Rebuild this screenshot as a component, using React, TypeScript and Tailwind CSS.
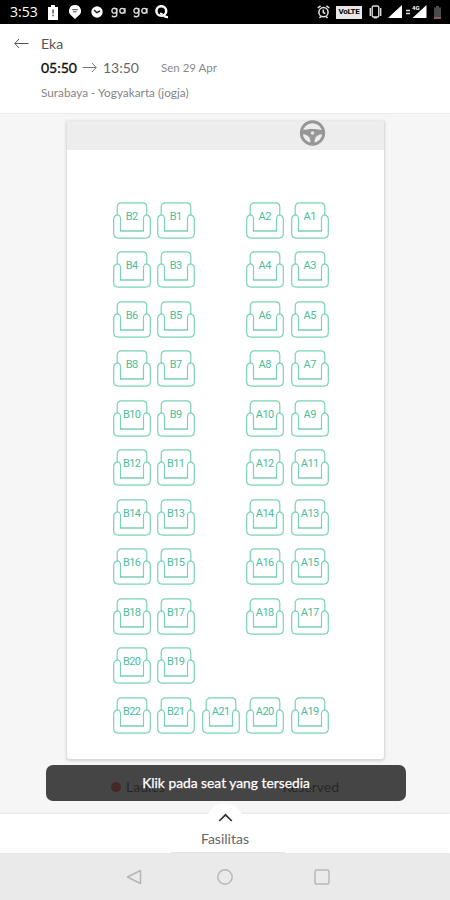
const rows: (string | null)[][] = [
  ['B2', 'B1', null, 'A2', 'A1'],
  ['B4', 'B3', null, 'A4', 'A3'],
  ['B6', 'B5', null, 'A6', 'A5'],
  ['B8', 'B7', null, 'A8', 'A7'],
  ['B10', 'B9', null, 'A10', 'A9'],
  ['B12', 'B11', null, 'A12', 'A11'],
  ['B14', 'B13', null, 'A14', 'A13'],
  ['B16', 'B15', null, 'A16', 'A15'],
  ['B18', 'B17', null, 'A18', 'A17'],
  ['B20', 'B19', null, null, null],
  ['B22', 'B21', 'A21', 'A20', 'A19'],
];

function Seat({ label }: { label: string }) {
  return (
    <svg width="38" height="38" viewBox="0 0 38 38" fill="none" stroke="#7ad2b8" strokeWidth="1.2">
      <path d="M4.2 13V5.3C4.2 2.6 5.8 .8 8.3 .8H29.7C32.2 .8 33.8 2.6 33.8 5.3V13" />
      <path d="M7.5 29V16.5C7.5 14.5 6 12.8 4.3 12.8C2.6 13.3 .7 15 .7 17.2V31.6C.7 34.4 2.6 36.2 5.4 36.2H32.6C35.4 36.2 37.3 34.4 37.3 31.6V17.2C37.3 15 35.4 13.3 33.7 12.8C32 12.8 30.5 14.5 30.5 16.5V29" />
      <path d="M7 29H31" stroke="#5cc3a2" />
      <text x="18.7" y="17.6" textAnchor="middle" fill="#4dbd9a" stroke="none" className="font-['Roboto',sans-serif] text-[11px] tracking-[-0.6px]">
        {label}
      </text>
    </svg>
  );
}

function StatusBar() {
  return (
    <div className="flex h-[23.5px] shrink-0 items-center bg-black pl-[10px] pr-[9px] pt-[1px] font-['Open_Sans',sans-serif] text-white">
      <span className="w-[38px] text-[14px] leading-none">3:53</span>
      <svg width="10" height="15" viewBox="0 0 10 15" fill="#fff">
        <path d="M0 2h3V0h4v2h3v13H0z" />
        <path d="M4.3 4.5h1.5v4H4.3zm0 5.3h1.5v1.5H4.3z" fill="#555" />
      </svg>
      <svg className="ml-[11px]" width="12" height="14" viewBox="0 0 12 14" fill="#fff">
        <path d="M6 0a6 6 0 0 1 3 11.2L6 14l-3-2.8A6 6 0 0 1 6 0z" />
        <path d="M3.3 4.7h5.4M4 6.8h3.5" stroke="#444" />
      </svg>
      <svg className="ml-[10px]" width="12" height="12" viewBox="0 0 12 12">
        <circle cx="6" cy="6" r="5.7" fill="#fff" />
        <path d="M3 4l2.7 2.6L9 5" stroke="#222" strokeWidth="1.4" fill="none" />
      </svg>
      {['a', 'b'].map((key) => (
        <svg key={key} className={key === 'a' ? 'ml-[8px]' : 'ml-[7px]'} width="15" height="11" viewBox="0 0 15 11" fill="none" stroke="#ddd" strokeWidth="1.4">
          <circle cx="3.3" cy="3.7" r="2.4" />
          <path d="M5.8 1.3v6c0 3-3.9 3-4.8 1.3M13.9 1v5.6" />
          <circle cx="11.2" cy="3.8" r="2.4" />
        </svg>
      ))}
      <svg className="ml-[7px]" width="14" height="14" viewBox="0 0 14 14" fill="none" stroke="#fff">
        <ellipse cx="6.3" cy="6" rx="4.9" ry="4.8" strokeWidth="2.5" />
        <path d="M5 8.5c3-.3 3.6 4.2 8 3.6" strokeWidth="2.2" />
      </svg>
      <svg className="ml-auto" width="13" height="14" viewBox="0 0 13 14" fill="none" stroke="#e5e5e5" strokeWidth="1.5">
        <circle cx="6.5" cy="7.2" r="4.6" />
        <path d="M.7 3L3.6.9M12.3 3L9.4.9M6.3 4.5v3l2 1.2M2.5 13l1.3-1.5M10.5 13l-1.3-1.5" />
      </svg>
      <span className="ml-[6px] flex h-[13px] w-[26px] items-center justify-center bg-[#e8e8e8] font-['Roboto',sans-serif] text-[8px] font-bold leading-none tracking-[-0.3px] text-black">VoLTE</span>
      <svg className="ml-[7px]" width="13" height="14" viewBox="0 0 13 14" fill="none" stroke="#ddd" strokeWidth="1.4">
        <rect x="3.2" y="1" width="6.6" height="11" rx="1.5" />
        <path d="M1.3 3v8M11.7 3v8M5 12.8h3" />
      </svg>
      <svg className="ml-[6px]" width="39" height="16" viewBox="0 0 39 16" fill="#fff">
        <path d="M0 14L14 1v13zM24.5 14L38.5 1v13z" />
        <path d="M18 6.5h4M18 9.5h4" stroke="#ddd" strokeWidth="1.4" />
        <text x="24" y="6" className="font-['Roboto',sans-serif] text-[6px] font-bold">4G</text>
      </svg>
      <svg className="ml-[7px]" width="7" height="13" viewBox="0 0 7 13">
        <path d="M0 1.5h2V0h3v1.5h2V13H0z" fill="#4a4a4a" />
        <path d="M0 11h7v2H0z" fill="#80605c" />
      </svg>
    </div>
  );
}

export default function App() {
  return (
    <div className="relative flex h-[900px] w-[450px] flex-col overflow-hidden bg-[#f6f6f6] font-['Lato',sans-serif]">
      <StatusBar />
      <header className="flex h-[90px] shrink-0 border-b border-[#e9e9e9] bg-white pl-[14px] pt-[11px]">
        <svg className="mt-[3px]" width="15" height="11" viewBox="0 0 15 11" fill="none" stroke="#555" strokeWidth="1">
          <path d="M5 1L.8 5.5 5 10M.8 5.5H14.5" />
        </svg>
        <div className="ml-[12px]">
          <div className="text-[14px] leading-[17px] text-[#555]">Eka</div>
          <div className="mt-[7px] flex h-[18px] items-center text-[14px] leading-[18px] text-[#666]">
            <span className="w-[37px] text-[#111] [-webkit-text-stroke:0.35px_#111]">05:50</span>
            <svg className="ml-[4px] mr-[6px]" width="15" height="11" viewBox="0 0 15 11" fill="none" stroke="#777" strokeWidth="1">
              <path d="M10 1l4.2 4.5L10 10M.5 5.5h13.7" />
            </svg>
            <span className="w-[36px]">13:50</span>
            <span className="ml-[22px] text-[11.5px] text-[#8a8a8a]">Sen 29 Apr</span>
          </div>
          <div className="mt-[8px] text-[11.8px] leading-[16px] text-[#858585]">Surabaya - Yogyakarta (jogja)</div>
        </div>
      </header>
      <main className="flex min-h-0 flex-1 flex-col items-center pt-[7px]">
        <section className="flex h-[638px] w-[317px] shrink-0 flex-col rounded-b-[3px] bg-white shadow-[0_1px_3px_1px_rgba(0,0,0,0.14)]">
          <div className="flex h-[29px] shrink-0 justify-end bg-[#ededed] pr-[58px]">
            <svg className="-mt-[1px]" width="27" height="27" viewBox="0 0 27 27" fill="none" stroke="#969696">
              <circle cx="13.5" cy="13" r="11.2" strokeWidth="2.9" />
              <path d="M3 10.5C9 8.5 18 8.5 24 10.5L23.5 14.2C20 14.2 17 16 15.8 19.2L15.3 24H11.7L11.2 19.2C10 16 7 14.2 3.5 14.2Z" fill="#969696" stroke="none" />
              <circle cx="13.5" cy="13" r="1.8" fill="#e5e5e5" stroke="none" />
              <path d="M9.5 15.2L12 18.2M17.5 15.2L15 18.2" stroke="#b0b0b0" strokeWidth=".7" />
            </svg>
          </div>
          <div className="mt-[52px] flex flex-col gap-[11.5px] pl-[46px]">
            {rows.map((row, index) => (
              <div key={index} className="grid h-[38px] grid-cols-[repeat(5,38px)] gap-[6.5px]">
                {row.map((label, column) => (label ? <Seat key={column} label={label} /> : <div key={column} />))}
              </div>
            ))}
          </div>
        </section>
        <div className="mt-[19px] flex h-[18px] w-[228px] shrink-0 items-center text-[14px] leading-[18px] text-black">
          <span className="mr-[5px] h-[10px] w-[10px] rounded-full bg-[#ff0000]" />
          <span>Ladies</span>
          <span className="ml-auto">Reserved</span>
        </div>
      </main>
      <div className="relative flex h-[39.5px] shrink-0 flex-col items-center bg-white shadow-[0_-1px_2px_rgba(0,0,0,0.07)]">
        <div className="absolute -top-[11px] h-[36px] w-[36px] rounded-full bg-white" />
        <svg className="relative -mt-[1px]" width="15" height="10" viewBox="0 0 15 10" fill="none" stroke="#333" strokeWidth="1.7">
          <path d="M1.2 8L7.5 1.8 13.8 8" />
        </svg>
        <div className="relative mt-[7px] text-[14px] leading-[18px] text-[#666]">Fasilitas</div>
        <div className="mt-auto h-[1.5px] w-[114px] translate-x-[3px] bg-[#e5e3e3]" />
      </div>
      <nav className="flex h-[47px] shrink-0 items-center bg-[#eaeaea] pl-[126px]">
        <svg className="mr-[75px]" width="16" height="16" viewBox="0 0 16 16" fill="none" stroke="#b5b5b5" strokeWidth="1.5" strokeLinejoin="round">
          <path d="M14.5 1.5v13L1.5 8z" />
        </svg>
        <svg width="16" height="16" viewBox="0 0 16 16" fill="none" stroke="#b8b8b8" strokeWidth="1.5">
          <circle cx="8" cy="8" r="7.2" />
        </svg>
        <svg className="ml-[81px]" width="16" height="16" viewBox="0 0 16 16" fill="none" stroke="#b8b8b8" strokeWidth="1.5">
          <rect x="1" y="1" width="14" height="14" rx="1.8" />
        </svg>
      </nav>
      <div className="absolute left-[46px] top-[765px] flex h-[36px] w-[360px] items-center justify-center rounded-[7px] bg-[#2c2c2c]/88 text-[13.8px] text-white">
        <span className="[-webkit-text-stroke:0.25px_#fff]">Klik pada seat yang tersedia</span>
      </div>
    </div>
  );
}
